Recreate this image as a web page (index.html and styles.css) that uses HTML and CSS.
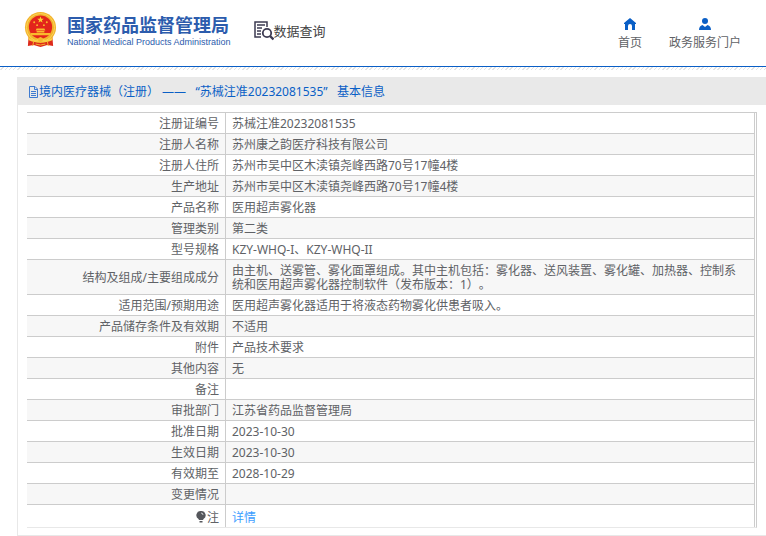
FILE: index.html
```html
<!DOCTYPE html>
<html lang="zh-CN">
  <head>
    <meta charset="UTF-8" />
    <meta name="viewport" content="width=device-width, initial-scale=1.0" />
    <title>数据查询 - 国家药品监督管理局</title>
    <link rel="stylesheet" href="styles.css">
  </head>
  <body>
    <header class="header">
      <a class="brand" href="#">
        <svg class="emblem" viewBox="0 0 34 36" aria-hidden="true">
          <path d="M5 22 L4 35 L10 34 L17 36 L24 34 L30 35 L29 22 Z" fill="#dd2a1b" />
          <circle cx="17" cy="16" r="16" fill="#f3b32c" />
          <circle cx="17" cy="16" r="14.5" fill="none" stroke="#fad45a" stroke-width="1" />
          <circle cx="17" cy="15.5" r="12" fill="#e3241b" />
          <path d="M17 4.5l.9 2.3 2.5.1-2 1.5.7 2.4-2.1-1.4-2.1 1.4.7-2.4-2-1.5 2.5-.1z" fill="#fbd22f" />
          <g fill="#f9b92c">
            <circle cx="10.5" cy="10.5" r="1" />
            <circle cx="13.5" cy="13.5" r="1" />
            <circle cx="20.5" cy="13.5" r="1" />
            <circle cx="23.5" cy="10.5" r="1" />
            <path d="M13 17h8l1 2h-10zM13 19.5h8v1.5h-8zM7 21.5h20v2.5H7z" />
          </g>
          <path d="M4 26q6 4 10 2l3-2 3 2q4 2 10-2l-1 3q-6 3-9 1l-3-1-3 1q-3 2-9-1z" fill="#fad045" />
          <circle cx="17" cy="28.5" r="2.500" fill="#f5b82c" />
          <path d="M10 30l-1 5M24 30l1 5M12 33q5 2 10 0" fill="none" stroke="#f6b32c" stroke-width="1" />
        </svg>
        <span class="brand-text">
          <span class="brand-name">国家药品监督管理局</span>
          <span class="brand-en">National Medical Products Administration</span>
        </span>
      </a>
      <a class="query" href="#">
        <svg class="query-icon" viewBox="0 0 20 20" aria-hidden="true">
          <path d="M13 6V1H1v15h6" fill="none" stroke="#3d3b52" stroke-width="1.5" />
          <path d="M3 4h8M3 7h5M3 10h4M3 13h4" stroke="#3d3b52" stroke-width="1.3" />
          <circle cx="13" cy="12" r="4.2" fill="#fff" stroke="#3d3b52" stroke-width="1.8" />
          <path d="M16 15l3.5 3.5" stroke="#3d3b52" stroke-width="2.4" />
        </svg>
        <span>数据查询</span>
      </a>
      <nav class="nav">
        <a class="nav-item" href="#">
          <svg class="nav-icon" viewBox="0 0 12 12" aria-hidden="true">
            <path d="M6 0L0 5v1h1v6h3V8q0-2 2-2t2 2v4h3V6h1V5z" fill="#0a5fc6" />
          </svg>
          首页
        </a>
        <a class="nav-item" href="#">
          <svg class="nav-icon" viewBox="0 0 12 12" aria-hidden="true">
            <circle cx="6" cy="3" r="3" fill="#0a5fc6" />
            <path d="M0 12q0-4 3.500-5L6 9l2.500-2Q12 8 12 12z" fill="#0a5fc6" />
          </svg>
          政务服务门户
        </a>
      </nav>
    </header>
    <div class="stripe"></div>

    <main class="panel">
      <h1 class="panel-title">
        <svg class="doc-icon" viewBox="0 0 11 12" aria-hidden="true">
          <path d="M1.500.5H7L9.500 3v8.500h-8zM6.500.5v3h3M3 5.500h5M3 7.500h5M3 9.500h5" fill="none" stroke="#3f7bd0" />
        </svg>
        <span>境内医疗器械（注册） ——&nbsp;&nbsp; “苏械注准20232081535”&nbsp;&nbsp; 基本信息</span>
      </h1>
      <div class="panel-body">
        <table class="info">
          <tbody>
            <tr><th scope="row">注册证编号</th><td>苏械注准20232081535</td></tr>
            <tr><th scope="row">注册人名称</th><td>苏州康之韵医疗科技有限公司</td></tr>
            <tr><th scope="row">注册人住所</th><td>苏州市吴中区木渎镇尧峰西路70号17幢4楼</td></tr>
            <tr><th scope="row">生产地址</th><td>苏州市吴中区木渎镇尧峰西路70号17幢4楼</td></tr>
            <tr><th scope="row">产品名称</th><td>医用超声雾化器</td></tr>
            <tr><th scope="row">管理类别</th><td>第二类</td></tr>
            <tr><th scope="row">型号规格</th><td>KZY-WHQ-I、KZY-WHQ-II</td></tr>
            <tr><th scope="row">结构及组成/主要组成成分</th><td>由主机、送雾管、雾化面罩组成。其中主机包括：雾化器、送风装置、雾化罐、加热器、控制系统和医用超声雾化器控制软件（发布版本：1）。</td></tr>
            <tr><th scope="row">适用范围/预期用途</th><td>医用超声雾化器适用于将液态药物雾化供患者吸入。</td></tr>
            <tr><th scope="row">产品储存条件及有效期</th><td>不适用</td></tr>
            <tr><th scope="row">附件</th><td>产品技术要求</td></tr>
            <tr><th scope="row">其他内容</th><td>无</td></tr>
            <tr><th scope="row">备注</th><td></td></tr>
            <tr><th scope="row">审批部门</th><td>江苏省药品监督管理局</td></tr>
            <tr><th scope="row">批准日期</th><td>2023-10-30</td></tr>
            <tr><th scope="row">生效日期</th><td>2023-10-30</td></tr>
            <tr><th scope="row">有效期至</th><td>2028-10-29</td></tr>
            <tr><th scope="row">变更情况</th><td></td></tr>
            <tr class="note">
              <th scope="row">
                <svg class="bulb" viewBox="0 0 10 12" aria-hidden="true">
                  <path d="M5 0a4.300 4.300 0 0 0-2.500 8l.5 1h4l.5-1A4.300 4.300 0 0 0 5 0zM3.500 10h3v1.500h-3z" fill="#55575c" />
                  <path d="M5 2q2 0 2 2" fill="none" stroke="#fff" stroke-width=".7" />
                </svg>注</th>
              <td><a href="#">详情</a></td>
            </tr>
          </tbody>
        </table>
      </div>
    </main>
  </body>
</html>
```
FILE: styles.css
```css
body {
  margin: 0;
  background-color: #fff;
  color: #606266;
  font-family: "Noto Sans", "Noto Sans CJK SC", sans-serif;
  font-size: 12px;
  line-height: 14px;
  text-spacing-trim: space-all;
}
a {
  color: inherit;
  text-decoration: none;
}
svg {
  flex-shrink: 0;
}
.header {
  display: flex;
  align-items: center;
  box-sizing: border-box;
  height: 67px;
  padding: 0 25px 8px 24px;
  border-bottom: 1px solid #0a5fc6;
}
.brand {
  display: flex;
  align-items: center;
  gap: 10px;
  color: #2c5cad;
}
.emblem {
  width: 33px;
  height: 35px;
}
.brand-text {
  display: flex;
  flex-direction: column;
  padding-top: 6px;
}
.brand-name {
  font-size: 18px;
  font-weight: 700;
  line-height: 20px;
}
.brand-en {
  font-family: "Liberation Sans", Arial, sans-serif;
  font-size: 9px;
}
.query {
  display: flex;
  align-items: center;
  margin-left: 23px;
  padding-top: 4px;
  color: #444;
  font-size: 13px;
}
.query-icon {
  width: 20px;
  height: 20px;
}
.nav {
  display: flex;
  gap: 27px;
  margin-left: auto;
}
.nav-item {
  display: flex;
  flex-direction: column;
  align-items: center;
  gap: 6px;
  padding-top: 9px;
}
.nav-icon {
  width: 12px;
  height: 12px;
}
.stripe {
  height: 3px;
  background: repeating-linear-gradient(135deg, #fff 0, #fff 2px, #e4e4e4 2px, #e4e4e4 3px);
}

.panel {
  margin: 7px 0 0 17px;
  border: 1px solid #e8e8e8;
  border-width: 0 0 1px 1px;
}
.panel-title {
  display: flex;
  align-items: center;
  box-sizing: border-box;
  height: 28px;
  margin: 0 0 0 -1px;
  padding: 2px 0 0 11px;
  background-color: #e9e9e9;
  color: #0a5fc6;
  font-size: 12px;
  font-weight: 400;
}
.doc-icon {
  width: 11px;
  height: 12px;
}
.panel-body {
  padding: 7px 9px;
}
.info {
  width: 100%;
  padding-right: 1px;
  border: 1px solid #ccc;
  border-width: 1px 1px 1px 0;
  border-bottom-color: #e8e8e8;
  border-spacing: 0;
}
.info th,
.info td {
  height: 14px;
  padding: 4px 6px 2px;
  border: 1px solid #ccc;
  border-width: 0 1px 1px 0;
}
.info th {
  width: 186px;
  font-weight: 400;
  text-align: right;
}
.info td {
  padding-right: 12px;
}
.info tr:nth-child(even) {
  background-color: #f7f7f7;
}
.info .note th,
.info .note td {
  padding: 6px 6px 2px;
  border-bottom: 0;
}
.info .note a {
  color: #409eff;
}
.bulb {
  width: 10px;
  height: 12px;
  margin-right: 1px;
  vertical-align: -1px;
}
```
